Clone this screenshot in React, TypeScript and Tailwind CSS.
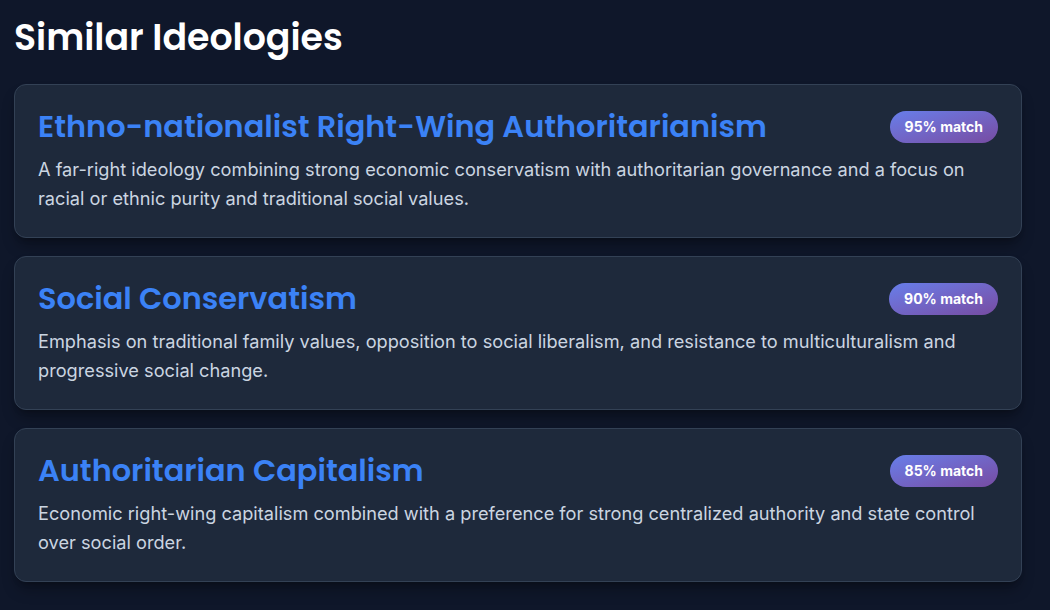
const ideologies = [
  {
    name: "Ethno-nationalist Right-Wing Authoritarianism",
    match: 95,
    description:
      "A far-right ideology combining strong economic conservatism with authoritarian governance and a focus on racial or ethnic purity and traditional social values.",
  },
  {
    name: "Social Conservatism",
    match: 90,
    description:
      "Emphasis on traditional family values, opposition to social liberalism, and resistance to multiculturalism and progressive social change.",
  },
  {
    name: "Authoritarian Capitalism",
    match: 85,
    description:
      "Economic right-wing capitalism combined with a preference for strong centralized authority and state control over social order.",
  },
];

export default function App() {
  return (
    <div className="min-h-screen bg-[#0f172a] px-[14px] pt-[16px] pb-8 font-['Inter',sans-serif]">
      <h2 className="text-[36.3px] leading-[44px] font-semibold text-white mb-[24px] font-['Poppins','Open_Sans',sans-serif]">
        Similar Ideologies
      </h2>

      <div className="flex flex-col gap-[18px] w-[1008px]">
        {ideologies.map((item) => (
          <div
            key={item.name}
            className="rounded-xl border border-[#334155] bg-[#1e293b] px-[23px] py-6 shadow-lg shadow-black/30"
          >
            <div className="flex items-center justify-between gap-4 mb-[10px]">
              <h3 className="text-[30.4px] leading-[36px] font-semibold text-[#3b82f6] font-['Poppins','Open_Sans',sans-serif]">
                {item.name}
              </h3>
              <span className="shrink-0 rounded-full bg-gradient-to-br from-[#667eea] to-[#764ba2] px-[15px] h-8 flex items-center text-sm font-bold text-white">
                {item.match}% match
              </span>
            </div>
            <p className="text-[18.2px] leading-[29px] text-[#cbd5e1]">
              {item.description}
            </p>
          </div>
        ))}
      </div>
    </div>
  );
}
